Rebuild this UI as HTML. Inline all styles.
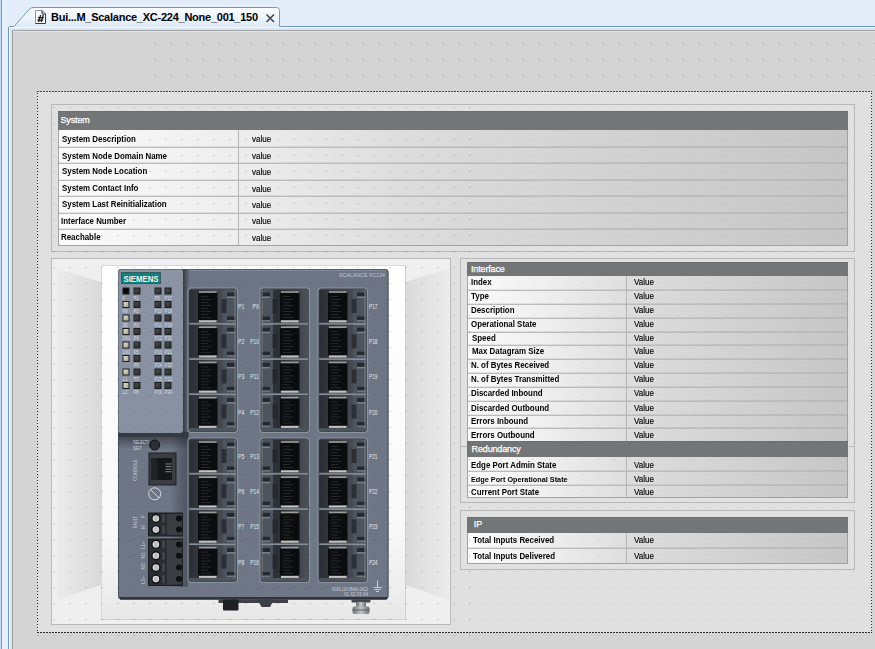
<!DOCTYPE html>
<html><head><meta charset="utf-8">
<style>
*{margin:0;padding:0;box-sizing:border-box}
html,body{width:875px;height:649px;overflow:hidden}
body{position:relative;background:#e3edf9;font-family:"Liberation Sans",sans-serif}
.a{position:absolute}
.dots{position:absolute;background-image:linear-gradient(90deg,#a8a8ea 2px,transparent 2px),linear-gradient(180deg,#000 1px,transparent 1px);background-size:16px 16px}
.hd{background:#737577;border-top:1px solid #6b6d6f;color:#fff;font-size:9px;overflow:hidden}
.ht{color:#fff;font-size:9px;line-height:12px;white-space:nowrap;-webkit-text-stroke:0.25px #fff;letter-spacing:-0.15px}
.row{background:linear-gradient(90deg,#fbfbfb 0%,#eeeeee 22%,#dcdcdc 45%,#c6c6c6 100%);overflow:hidden}
.lb{font-weight:bold;font-size:8.5px;line-height:12px;color:#000;white-space:nowrap;transform:scaleX(.93);transform-origin:0 0}
.sm{font-size:7.5px;transform:scaleX(.97)}
.vl{font-size:8.5px;line-height:12px;color:#000;white-space:nowrap;transform:scaleX(.94);transform-origin:0 0;-webkit-text-stroke:0.15px #000}
.sep{height:1px;background:#adadad}
.dt{background-size:16px 16px;-webkit-mask-image:linear-gradient(180deg,#000 1px,transparent 1px);-webkit-mask-size:16px 16px;}
.pnl{position:absolute;border:1px solid #b8b8b8;background:#e1e1e1}
</style></head><body>
<!-- window frame -->
<div class="a" style="left:0;top:0;width:1px;height:649px;background:#c4daf2"></div>
<div class="a" style="left:1px;top:0;width:1px;height:649px;background:#7f9dc0"></div>
<div class="a" style="left:2px;top:0;width:6px;height:649px;background:#e6f0fb"></div>
<div class="a" style="left:8px;top:5px;width:867px;height:1px;background:#e7f0fb"></div>
<svg class="a" style="left:0;top:0" width="875" height="31">
 <defs><linearGradient id="tg" x1="0" y1="0" x2="0" y2="1"><stop offset="0" stop-color="#fdfeff"/><stop offset="1" stop-color="#d8e6f7"/></linearGradient></defs>
 <path d="M8.5,31 V27.5 L9.5,26.5 H14 L29.5,9 Q31,7.5 34,7.5 H276.5 Q279.5,7.5 279.5,10.5 V26.5 H875 V31 Z" fill="url(#tg)" stroke="none"/>
 <path d="M8.5,31 V27.5 L9.5,26.5 H14 L29.5,9 Q31,7.5 34,7.5 H276.5 Q279.5,7.5 279.5,10.5 V26.5 H875" fill="none" stroke="#6f9bbf" stroke-width="1"/>
 <rect x="9" y="27" width="866" height="1" fill="#ffffff"/>
 <rect x="9" y="28" width="866" height="2" fill="#d6e5f8"/>
 <rect x="9" y="27" width="1" height="4" fill="#ffffff"/>
</svg>
<!-- tab icon -->
<svg class="a" style="left:34px;top:9px" width="14" height="17">
 <path d="M1.5,14.5 V1.5 H8" fill="none" stroke="#9a92b2" stroke-width="1"/>
 <rect x="2" y="2" width="9" height="12" fill="#ffffff"/>
 <path d="M8,1.5 L11.5,5 V14.5 H1.5" fill="none" stroke="#34345e" stroke-width="1"/>
 <path d="M8,1.5 V5 H11.5" fill="#cfcfe0" stroke="#34345e" stroke-width="1"/>
 <path d="M4.6,13.2 L6.6,6 M7.2,13.2 L9.2,6 M3.9,8.7 H9.8 M3.4,11.2 H9.2" stroke="#1a1a1a" stroke-width="1.3" fill="none"/>
</svg>
<div class="a" style="left:51px;top:9px;font:bold 11px 'Liberation Sans';letter-spacing:-0.25px;color:#000;white-space:nowrap;line-height:16px">Bui...M_Scalance_XC-224_None_001_150</div>
<svg class="a" style="left:265px;top:13px" width="11" height="11"><path d="M1.5,1.5 L9,9 M9,1.5 L1.5,9" stroke="#404040" stroke-width="1.5"/></svg>
<div class="a" style="left:8px;top:27px;width:1px;height:622px;background:#7296ba"></div>
<div class="a" style="left:9px;top:27px;width:1px;height:622px;background:#ffffff"></div>
<div class="a" style="left:10px;top:28px;width:2px;height:621px;background:#d6e5f8"></div>
<!-- canvas -->
<div class="a" style="left:12px;top:30px;width:863px;height:619px;background:#d4d4d4;border-top:1px solid #a3a3a3;border-left:1px solid #a3a3a3"></div>
<div class="a" style="left:13px;top:31px;width:862px;height:1px;background:#e4e4e4"></div>
<!-- selection -->
<div class="a" style="left:37px;top:91px;width:835px;height:542px;background:#e0e0e0"></div>
<div class="a" style="left:37px;top:91px;width:835px;height:1px;background:repeating-linear-gradient(90deg,#4a4a4a 0 2px,transparent 2px 3px)"></div>
<div class="a" style="left:37px;top:632px;width:835px;height:1px;background:repeating-linear-gradient(90deg,#2a2a2a 0 2px,transparent 2px 3px)"></div>
<div class="a" style="left:37px;top:92px;width:1px;height:540px;background:repeating-linear-gradient(180deg,transparent 0 1px,#2a2a2a 1px 2px,transparent 2px 3px)"></div>
<div class="a" style="left:871px;top:92px;width:1px;height:540px;background:repeating-linear-gradient(180deg,transparent 0 1px,#2a2a2a 1px 2px,transparent 2px 3px)"></div>
<!-- panels -->
<div class="pnl" style="left:51px;top:104px;width:804px;height:148px"></div>
<div class="pnl" style="left:51px;top:258px;width:400px;height:367px;background:#efefef"></div>
<div class="pnl" style="left:460px;top:258px;width:395px;height:245px"></div>
<div class="a" style="left:460px;top:446px;width:7px;height:1px;background:#b8b8b8"></div>
<div class="a" style="left:849px;top:446px;width:6px;height:1px;background:#b8b8b8"></div>
<div class="pnl" style="left:460px;top:510px;width:395px;height:60px"></div>
<div class="a hd" style="left:58px;top:111px;width:790px;height:19px"></div>
<span class="a ht" style="left:60.5px;top:114.0px">System</span>
<div class="a row" style="left:58px;top:130px;width:790px;height:17px"></div>
<div class="a sep" style="left:58px;top:146px;width:790px;background:rgba(0,0,0,.08)"></div>
<div class="a sep" style="left:58px;top:147px;width:790px;background:rgba(0,0,0,.17)"></div>
<div class="a row" style="left:58px;top:148px;width:790px;height:15px"></div>
<div class="a sep" style="left:58px;top:162px;width:790px;background:rgba(0,0,0,.08)"></div>
<div class="a sep" style="left:58px;top:163px;width:790px;background:rgba(0,0,0,.17)"></div>
<div class="a row" style="left:58px;top:164px;width:790px;height:16px"></div>
<div class="a sep" style="left:58px;top:179px;width:790px;background:rgba(0,0,0,.08)"></div>
<div class="a sep" style="left:58px;top:180px;width:790px;background:rgba(0,0,0,.17)"></div>
<div class="a row" style="left:58px;top:181px;width:790px;height:15px"></div>
<div class="a sep" style="left:58px;top:195px;width:790px;background:rgba(0,0,0,.08)"></div>
<div class="a sep" style="left:58px;top:196px;width:790px;background:rgba(0,0,0,.17)"></div>
<div class="a row" style="left:58px;top:197px;width:790px;height:16px"></div>
<div class="a sep" style="left:58px;top:212px;width:790px;background:rgba(0,0,0,.08)"></div>
<div class="a sep" style="left:58px;top:213px;width:790px;background:rgba(0,0,0,.17)"></div>
<div class="a row" style="left:58px;top:214px;width:790px;height:15px"></div>
<div class="a sep" style="left:58px;top:228px;width:790px;background:rgba(0,0,0,.08)"></div>
<div class="a sep" style="left:58px;top:229px;width:790px;background:rgba(0,0,0,.17)"></div>
<div class="a row" style="left:58px;top:230px;width:790px;height:15px"></div>
<div class="a sep" style="left:58px;top:245px;width:790px;background:#a2a2a2"></div>
<span class="a lb" style="left:61.5px;top:133.0px">System Description</span>
<span class="a vl" style="left:252px;top:133.0px">value</span>
<span class="a lb" style="left:61.5px;top:150.0px">System Node Domain Name</span>
<span class="a vl" style="left:252px;top:150.0px">value</span>
<span class="a lb" style="left:61.5px;top:164.5px">System Node Location</span>
<span class="a vl" style="left:252px;top:166.0px">value</span>
<span class="a lb" style="left:61.5px;top:181.5px">System Contact Info</span>
<span class="a vl" style="left:252px;top:183.0px">value</span>
<span class="a lb" style="left:61.5px;top:197.5px">System Last Reinitialization</span>
<span class="a vl" style="left:252px;top:199.0px">value</span>
<span class="a lb" style="left:60.8px;top:215.0px">Interface Number</span>
<span class="a vl" style="left:252px;top:215.0px">value</span>
<span class="a lb" style="left:60.8px;top:231.0px">Reachable</span>
<span class="a vl" style="left:252px;top:232.0px">value</span>
<div class="a" style="left:58px;top:130px;width:1px;height:115px;background:#a4a4a4"></div>
<div class="a" style="left:847px;top:130px;width:1px;height:115px;background:#a2a2a2"></div>
<div class="a" style="left:238px;top:130px;width:1px;height:115px;background:#b4b4b4"></div>
<div class="a hd" style="left:467px;top:262px;width:381px;height:14px"></div>
<span class="a ht" style="left:471px;top:263.0px">Interface</span>
<div class="a row" style="left:467px;top:276px;width:381px;height:14px"></div>
<div class="a sep" style="left:467px;top:289px;width:381px;background:rgba(0,0,0,.08)"></div>
<div class="a sep" style="left:467px;top:290px;width:381px;background:rgba(0,0,0,.17)"></div>
<div class="a row" style="left:467px;top:291px;width:381px;height:13px"></div>
<div class="a sep" style="left:467px;top:303px;width:381px;background:rgba(0,0,0,.08)"></div>
<div class="a sep" style="left:467px;top:304px;width:381px;background:rgba(0,0,0,.17)"></div>
<div class="a row" style="left:467px;top:305px;width:381px;height:13px"></div>
<div class="a sep" style="left:467px;top:317px;width:381px;background:rgba(0,0,0,.08)"></div>
<div class="a sep" style="left:467px;top:318px;width:381px;background:rgba(0,0,0,.17)"></div>
<div class="a row" style="left:467px;top:319px;width:381px;height:13px"></div>
<div class="a sep" style="left:467px;top:331px;width:381px;background:rgba(0,0,0,.08)"></div>
<div class="a sep" style="left:467px;top:332px;width:381px;background:rgba(0,0,0,.17)"></div>
<div class="a row" style="left:467px;top:333px;width:381px;height:12px"></div>
<div class="a sep" style="left:467px;top:344px;width:381px;background:rgba(0,0,0,.08)"></div>
<div class="a sep" style="left:467px;top:345px;width:381px;background:rgba(0,0,0,.17)"></div>
<div class="a row" style="left:467px;top:346px;width:381px;height:13px"></div>
<div class="a sep" style="left:467px;top:358px;width:381px;background:rgba(0,0,0,.08)"></div>
<div class="a sep" style="left:467px;top:359px;width:381px;background:rgba(0,0,0,.17)"></div>
<div class="a row" style="left:467px;top:360px;width:381px;height:13px"></div>
<div class="a sep" style="left:467px;top:372px;width:381px;background:rgba(0,0,0,.08)"></div>
<div class="a sep" style="left:467px;top:373px;width:381px;background:rgba(0,0,0,.17)"></div>
<div class="a row" style="left:467px;top:374px;width:381px;height:13px"></div>
<div class="a sep" style="left:467px;top:386px;width:381px;background:rgba(0,0,0,.08)"></div>
<div class="a sep" style="left:467px;top:387px;width:381px;background:rgba(0,0,0,.17)"></div>
<div class="a row" style="left:467px;top:388px;width:381px;height:13px"></div>
<div class="a sep" style="left:467px;top:400px;width:381px;background:rgba(0,0,0,.08)"></div>
<div class="a sep" style="left:467px;top:401px;width:381px;background:rgba(0,0,0,.17)"></div>
<div class="a row" style="left:467px;top:402px;width:381px;height:13px"></div>
<div class="a sep" style="left:467px;top:414px;width:381px;background:rgba(0,0,0,.08)"></div>
<div class="a sep" style="left:467px;top:415px;width:381px;background:rgba(0,0,0,.17)"></div>
<div class="a row" style="left:467px;top:416px;width:381px;height:12px"></div>
<div class="a sep" style="left:467px;top:427px;width:381px;background:rgba(0,0,0,.08)"></div>
<div class="a sep" style="left:467px;top:428px;width:381px;background:rgba(0,0,0,.17)"></div>
<div class="a row" style="left:467px;top:429px;width:381px;height:12px"></div>
<div class="a sep" style="left:467px;top:441px;width:381px;background:#a2a2a2"></div>
<span class="a lb" style="left:471px;top:276.0px">Index</span>
<span class="a vl" style="left:633.8px;top:276.0px">Value</span>
<span class="a lb" style="left:471px;top:290.0px">Type</span>
<span class="a vl" style="left:633.8px;top:290.0px">Value</span>
<span class="a lb" style="left:471px;top:304.0px">Description</span>
<span class="a vl" style="left:633.8px;top:304.0px">Value</span>
<span class="a lb" style="left:471px;top:318.0px">Operational State</span>
<span class="a vl" style="left:633.8px;top:318.0px">Value</span>
<span class="a lb" style="left:472px;top:331.5px">Speed</span>
<span class="a vl" style="left:633.8px;top:331.5px">Value</span>
<span class="a lb" style="left:471.6px;top:345.0px">Max Datagram Size</span>
<span class="a vl" style="left:633.8px;top:345.0px">Value</span>
<span class="a lb" style="left:471px;top:359.0px">N. of Bytes Received</span>
<span class="a vl" style="left:633.8px;top:359.0px">Value</span>
<span class="a lb" style="left:471px;top:373.0px">N. of Bytes Transmitted</span>
<span class="a vl" style="left:633.8px;top:373.0px">Value</span>
<span class="a lb" style="left:471px;top:387.0px">Discarded Inbound</span>
<span class="a vl" style="left:633.8px;top:387.0px">Value</span>
<span class="a lb" style="left:471px;top:402.0px">Discarded Outbound</span>
<span class="a vl" style="left:633.8px;top:402.0px">Value</span>
<span class="a lb" style="left:471px;top:415.0px">Errors Inbound</span>
<span class="a vl" style="left:633.8px;top:415.0px">Value</span>
<span class="a lb" style="left:471px;top:429.0px">Errors Outbound</span>
<span class="a vl" style="left:633.8px;top:429.0px">Value</span>
<div class="a" style="left:467px;top:276px;width:1px;height:165px;background:#a4a4a4"></div>
<div class="a" style="left:847px;top:276px;width:1px;height:165px;background:#a2a2a2"></div>
<div class="a" style="left:626px;top:276px;width:1px;height:165px;background:#b4b4b4"></div>
<div class="a hd" style="left:467px;top:441px;width:381px;height:16px"></div>
<span class="a ht" style="left:471.6px;top:443.0px">Redundancy</span>
<div class="a row" style="left:467px;top:457px;width:381px;height:14px"></div>
<div class="a sep" style="left:467px;top:470px;width:381px;background:rgba(0,0,0,.08)"></div>
<div class="a sep" style="left:467px;top:471px;width:381px;background:rgba(0,0,0,.17)"></div>
<div class="a row" style="left:467px;top:472px;width:381px;height:13px"></div>
<div class="a sep" style="left:467px;top:484px;width:381px;background:rgba(0,0,0,.08)"></div>
<div class="a sep" style="left:467px;top:485px;width:381px;background:rgba(0,0,0,.17)"></div>
<div class="a row" style="left:467px;top:486px;width:381px;height:11px"></div>
<div class="a sep" style="left:467px;top:497px;width:381px;background:#a2a2a2"></div>
<span class="a lb" style="left:471.2px;top:459.0px">Edge Port Admin State</span>
<span class="a vl" style="left:633.8px;top:459.0px">Value</span>
<span class="a lb sm" style="left:471.2px;top:474.0px">Edge Port Operational State</span>
<span class="a vl" style="left:633.8px;top:473.0px">Value</span>
<span class="a lb" style="left:471.2px;top:486.0px">Current Port State</span>
<span class="a vl" style="left:633.8px;top:486.0px">Value</span>
<div class="a" style="left:467px;top:457px;width:1px;height:40px;background:#a4a4a4"></div>
<div class="a" style="left:847px;top:457px;width:1px;height:40px;background:#a2a2a2"></div>
<div class="a" style="left:626px;top:457px;width:1px;height:40px;background:#b4b4b4"></div>
<div class="a hd" style="left:467px;top:517px;width:381px;height:16px"></div>
<span class="a ht" style="left:473.8px;top:518.0px">IP</span>
<div class="a row" style="left:467px;top:533px;width:381px;height:15px"></div>
<div class="a sep" style="left:467px;top:547px;width:381px;background:rgba(0,0,0,.08)"></div>
<div class="a sep" style="left:467px;top:548px;width:381px;background:rgba(0,0,0,.17)"></div>
<div class="a row" style="left:467px;top:549px;width:381px;height:14px"></div>
<div class="a sep" style="left:467px;top:563px;width:381px;background:#a2a2a2"></div>
<span class="a lb" style="left:473.2px;top:534.0px">Total Inputs Received</span>
<span class="a vl" style="left:633.8px;top:534.0px">Value</span>
<span class="a lb" style="left:473.2px;top:549.5px">Total Inputs Delivered</span>
<span class="a vl" style="left:633.8px;top:549.5px">Value</span>
<div class="a" style="left:467px;top:533px;width:1px;height:30px;background:#a4a4a4"></div>
<div class="a" style="left:847px;top:533px;width:1px;height:30px;background:#a2a2a2"></div>
<div class="a" style="left:626px;top:533px;width:1px;height:30px;background:#b4b4b4"></div>
<svg class="a" style="left:0;top:0" width="875" height="649">
<defs>
<linearGradient id="trL" x1="0" y1="0" x2="1" y2="0"><stop offset="0" stop-color="#ececec"/><stop offset="1" stop-color="#d9d9d9"/></linearGradient>
<linearGradient id="trR" x1="0" y1="0" x2="1" y2="0"><stop offset="0" stop-color="#dadada"/><stop offset="1" stop-color="#ebebeb"/></linearGradient>
<linearGradient id="wh" x1="0" y1="0" x2="0" y2="1"><stop offset="0" stop-color="#ffffff"/><stop offset="0.75" stop-color="#f8f8f8"/><stop offset="1" stop-color="#e8e8e8"/></linearGradient>
<linearGradient id="body" x1="0" y1="0" x2="0" y2="1"><stop offset="0" stop-color="#6d7484"/><stop offset="1" stop-color="#6f7686"/></linearGradient>
<linearGradient id="ledp" x1="0" y1="0" x2="0" y2="1"><stop offset="0" stop-color="#8c94a4"/><stop offset="1" stop-color="#8790a0"/></linearGradient>
<linearGradient id="shd" x1="0" y1="0" x2="1" y2="0"><stop offset="0" stop-color="#2c3036"/><stop offset="1" stop-color="#656c7b"/></linearGradient>
<linearGradient id="rec" x1="0" y1="0" x2="1" y2="0"><stop offset="0" stop-color="#2b2f35"/><stop offset="0.3" stop-color="#33373d"/><stop offset="1" stop-color="#464a51"/></linearGradient>
<linearGradient id="recm" x1="0" y1="0" x2="1" y2="0"><stop offset="0" stop-color="#2f3339"/><stop offset="0.25" stop-color="#2b2f35"/><stop offset="1" stop-color="#4d525a"/></linearGradient>
<linearGradient id="led" x1="0" y1="0" x2="1" y2="1"><stop offset="0" stop-color="#e4e0cc"/><stop offset="1" stop-color="#a9a592"/></linearGradient>
<linearGradient id="ledd" x1="0" y1="0" x2="1" y2="1"><stop offset="0" stop-color="#4a4c4e"/><stop offset="1" stop-color="#2a2c2e"/></linearGradient>
<linearGradient id="gnd" x1="0" y1="0" x2="1" y2="0"><stop offset="0" stop-color="#6f7174"/><stop offset="0.5" stop-color="#c4c5c7"/><stop offset="1" stop-color="#6a6c70"/></linearGradient>
<linearGradient id="sh2" x1="0" y1="0" x2="1" y2="0"><stop offset="0" stop-color="#23272d" stop-opacity="0"/><stop offset="1" stop-color="#23272d" stop-opacity="0.45"/></linearGradient>
<linearGradient id="sh3" x1="0" y1="0" x2="0" y2="1"><stop offset="0" stop-color="#23272d" stop-opacity="0.55"/><stop offset="1" stop-color="#23272d" stop-opacity="0"/></linearGradient>
</defs>
<polygon points="57,269 101,282 101,585 57,600" fill="url(#trL)"/>
<polygon points="405,282 449,269 449,600 405,585" fill="url(#trR)"/>
<rect x="101" y="265" width="304" height="355" fill="url(#wh)"/>
<path d="M101.5,620 V265.5 H405" fill="none" stroke="#d8d8d8" stroke-width="1"/>
<path d="M101.5,619.5 H405.5 V265" fill="none" stroke="#d0d0d0" stroke-width="1"/>
<rect x="118" y="269" width="270.5" height="330.5" rx="3" fill="url(#body)"/>
<rect x="118.5" y="269.5" width="269.5" height="329.5" rx="3" fill="none" stroke="#4a505a" stroke-width="1"/>
<rect x="120" y="597" width="267" height="2.5" fill="#30343b"/>
<rect x="186" y="269.8" width="200" height="1.2" fill="#8a909b" opacity="0.8"/>
<rect x="182" y="269.5" width="7" height="168" fill="url(#shd)"/>
<rect x="118.5" y="432" width="70" height="5" fill="#353940"/>
<rect x="118.5" y="437" width="70" height="12" fill="url(#sh3)"/>
<rect x="170" y="437" width="18" height="150" fill="url(#sh2)"/>
<rect x="118" y="269" width="65" height="164" rx="3" fill="url(#ledp)"/>
<path d="M118.5,432 V272 Q118.5,269.5 121.5,269.5 H182.5" fill="none" stroke="#6a717f" stroke-width="1"/>
<rect x="121.5" y="272.5" width="39" height="11" fill="#12807c" stroke="#2f5f63" stroke-width="1"/>
<text x="141" y="281.8" text-anchor="middle" font-family="Liberation Sans" font-weight="bold" font-size="8.4" fill="#eef6f4" textLength="35" lengthAdjust="spacingAndGlyphs">SIEMENS</text>
<rect x="122.5" y="287.5" width="7" height="7" fill="#1c1d1f"/>
<rect x="123.5" y="288.5" width="5" height="5" fill="#080808"/>
<text x="122.5" y="299.8" font-family="Liberation Sans" font-size="4.6" fill="#d6dae0" textLength="2.6" lengthAdjust="spacingAndGlyphs">F</text>
<rect x="133.5" y="287.5" width="7" height="7" fill="#1c1d1f"/>
<rect x="134.5" y="288.5" width="5" height="5" fill="url(#ledd)"/>
<text x="133.5" y="299.8" font-family="Liberation Sans" font-size="4.6" fill="#d6dae0" textLength="5.2" lengthAdjust="spacingAndGlyphs">P1</text>
<rect x="154.5" y="287.5" width="7" height="7" fill="#1c1d1f"/>
<rect x="155.5" y="288.5" width="5" height="5" fill="url(#ledd)"/>
<text x="154.5" y="299.8" font-family="Liberation Sans" font-size="4.6" fill="#d6dae0" textLength="5.2" lengthAdjust="spacingAndGlyphs">P9</text>
<rect x="164.5" y="287.5" width="7" height="7" fill="#1c1d1f"/>
<rect x="165.5" y="288.5" width="5" height="5" fill="url(#ledd)"/>
<text x="164.5" y="299.8" font-family="Liberation Sans" font-size="4.6" fill="#d6dae0" textLength="7.800000000000001" lengthAdjust="spacingAndGlyphs">P17</text>
<rect x="122.5" y="301.0" width="7" height="7" fill="#1c1d1f"/>
<rect x="123.5" y="302.0" width="5" height="5" fill="url(#led)"/>
<text x="122.5" y="313.3" font-family="Liberation Sans" font-size="4.6" fill="#d6dae0" textLength="5.2" lengthAdjust="spacingAndGlyphs">RM</text>
<rect x="133.5" y="301.0" width="7" height="7" fill="#1c1d1f"/>
<rect x="134.5" y="302.0" width="5" height="5" fill="url(#ledd)"/>
<text x="133.5" y="313.3" font-family="Liberation Sans" font-size="4.6" fill="#d6dae0" textLength="5.2" lengthAdjust="spacingAndGlyphs">P2</text>
<rect x="154.5" y="301.0" width="7" height="7" fill="#1c1d1f"/>
<rect x="155.5" y="302.0" width="5" height="5" fill="url(#ledd)"/>
<text x="154.5" y="313.3" font-family="Liberation Sans" font-size="4.6" fill="#d6dae0" textLength="7.800000000000001" lengthAdjust="spacingAndGlyphs">P10</text>
<rect x="164.5" y="301.0" width="7" height="7" fill="#1c1d1f"/>
<rect x="165.5" y="302.0" width="5" height="5" fill="url(#ledd)"/>
<text x="164.5" y="313.3" font-family="Liberation Sans" font-size="4.6" fill="#d6dae0" textLength="7.800000000000001" lengthAdjust="spacingAndGlyphs">P18</text>
<rect x="122.5" y="314.5" width="7" height="7" fill="#1c1d1f"/>
<rect x="123.5" y="315.5" width="5" height="5" fill="url(#led)"/>
<text x="122.5" y="326.8" font-family="Liberation Sans" font-size="4.6" fill="#d6dae0" textLength="5.2" lengthAdjust="spacingAndGlyphs">SB</text>
<rect x="133.5" y="314.5" width="7" height="7" fill="#1c1d1f"/>
<rect x="134.5" y="315.5" width="5" height="5" fill="url(#ledd)"/>
<text x="133.5" y="326.8" font-family="Liberation Sans" font-size="4.6" fill="#d6dae0" textLength="5.2" lengthAdjust="spacingAndGlyphs">P3</text>
<rect x="154.5" y="314.5" width="7" height="7" fill="#1c1d1f"/>
<rect x="155.5" y="315.5" width="5" height="5" fill="url(#ledd)"/>
<text x="154.5" y="326.8" font-family="Liberation Sans" font-size="4.6" fill="#d6dae0" textLength="7.800000000000001" lengthAdjust="spacingAndGlyphs">P11</text>
<rect x="164.5" y="314.5" width="7" height="7" fill="#1c1d1f"/>
<rect x="165.5" y="315.5" width="5" height="5" fill="url(#ledd)"/>
<text x="164.5" y="326.8" font-family="Liberation Sans" font-size="4.6" fill="#d6dae0" textLength="7.800000000000001" lengthAdjust="spacingAndGlyphs">P19</text>
<rect x="122.5" y="328.0" width="7" height="7" fill="#1c1d1f"/>
<rect x="123.5" y="329.0" width="5" height="5" fill="url(#led)"/>
<text x="122.5" y="340.3" font-family="Liberation Sans" font-size="4.6" fill="#d6dae0" textLength="7.800000000000001" lengthAdjust="spacingAndGlyphs">DM1</text>
<rect x="133.5" y="328.0" width="7" height="7" fill="#1c1d1f"/>
<rect x="134.5" y="329.0" width="5" height="5" fill="url(#ledd)"/>
<text x="133.5" y="340.3" font-family="Liberation Sans" font-size="4.6" fill="#d6dae0" textLength="5.2" lengthAdjust="spacingAndGlyphs">P4</text>
<rect x="154.5" y="328.0" width="7" height="7" fill="#1c1d1f"/>
<rect x="155.5" y="329.0" width="5" height="5" fill="url(#ledd)"/>
<text x="154.5" y="340.3" font-family="Liberation Sans" font-size="4.6" fill="#d6dae0" textLength="7.800000000000001" lengthAdjust="spacingAndGlyphs">P12</text>
<rect x="164.5" y="328.0" width="7" height="7" fill="#1c1d1f"/>
<rect x="165.5" y="329.0" width="5" height="5" fill="url(#ledd)"/>
<text x="164.5" y="340.3" font-family="Liberation Sans" font-size="4.6" fill="#d6dae0" textLength="7.800000000000001" lengthAdjust="spacingAndGlyphs">P20</text>
<rect x="122.5" y="341.5" width="7" height="7" fill="#1c1d1f"/>
<rect x="123.5" y="342.5" width="5" height="5" fill="url(#led)"/>
<text x="122.5" y="353.8" font-family="Liberation Sans" font-size="4.6" fill="#d6dae0" textLength="7.800000000000001" lengthAdjust="spacingAndGlyphs">DM2</text>
<rect x="133.5" y="341.5" width="7" height="7" fill="#1c1d1f"/>
<rect x="134.5" y="342.5" width="5" height="5" fill="url(#ledd)"/>
<text x="133.5" y="353.8" font-family="Liberation Sans" font-size="4.6" fill="#d6dae0" textLength="5.2" lengthAdjust="spacingAndGlyphs">P5</text>
<rect x="154.5" y="341.5" width="7" height="7" fill="#1c1d1f"/>
<rect x="155.5" y="342.5" width="5" height="5" fill="url(#ledd)"/>
<text x="154.5" y="353.8" font-family="Liberation Sans" font-size="4.6" fill="#d6dae0" textLength="7.800000000000001" lengthAdjust="spacingAndGlyphs">P13</text>
<rect x="164.5" y="341.5" width="7" height="7" fill="#1c1d1f"/>
<rect x="165.5" y="342.5" width="5" height="5" fill="url(#ledd)"/>
<text x="164.5" y="353.8" font-family="Liberation Sans" font-size="4.6" fill="#d6dae0" textLength="7.800000000000001" lengthAdjust="spacingAndGlyphs">P21</text>
<rect x="122.5" y="355.0" width="7" height="7" fill="#1c1d1f"/>
<rect x="123.5" y="356.0" width="5" height="5" fill="url(#led)"/>
<rect x="133.5" y="355.0" width="7" height="7" fill="#1c1d1f"/>
<rect x="134.5" y="356.0" width="5" height="5" fill="url(#ledd)"/>
<text x="133.5" y="367.3" font-family="Liberation Sans" font-size="4.6" fill="#d6dae0" textLength="5.2" lengthAdjust="spacingAndGlyphs">P6</text>
<rect x="154.5" y="355.0" width="7" height="7" fill="#1c1d1f"/>
<rect x="155.5" y="356.0" width="5" height="5" fill="url(#ledd)"/>
<text x="154.5" y="367.3" font-family="Liberation Sans" font-size="4.6" fill="#d6dae0" textLength="7.800000000000001" lengthAdjust="spacingAndGlyphs">P14</text>
<rect x="164.5" y="355.0" width="7" height="7" fill="#1c1d1f"/>
<rect x="165.5" y="356.0" width="5" height="5" fill="url(#ledd)"/>
<text x="164.5" y="367.3" font-family="Liberation Sans" font-size="4.6" fill="#d6dae0" textLength="7.800000000000001" lengthAdjust="spacingAndGlyphs">P22</text>
<rect x="122.5" y="368.5" width="7" height="7" fill="#1c1d1f"/>
<rect x="123.5" y="369.5" width="5" height="5" fill="url(#led)"/>
<text x="122.5" y="380.8" font-family="Liberation Sans" font-size="4.6" fill="#d6dae0" textLength="5.2" lengthAdjust="spacingAndGlyphs">L1</text>
<rect x="133.5" y="368.5" width="7" height="7" fill="#1c1d1f"/>
<rect x="134.5" y="369.5" width="5" height="5" fill="url(#ledd)"/>
<text x="133.5" y="380.8" font-family="Liberation Sans" font-size="4.6" fill="#d6dae0" textLength="5.2" lengthAdjust="spacingAndGlyphs">P7</text>
<rect x="154.5" y="368.5" width="7" height="7" fill="#1c1d1f"/>
<rect x="155.5" y="369.5" width="5" height="5" fill="url(#ledd)"/>
<text x="154.5" y="380.8" font-family="Liberation Sans" font-size="4.6" fill="#d6dae0" textLength="7.800000000000001" lengthAdjust="spacingAndGlyphs">P15</text>
<rect x="164.5" y="368.5" width="7" height="7" fill="#1c1d1f"/>
<rect x="165.5" y="369.5" width="5" height="5" fill="url(#ledd)"/>
<text x="164.5" y="380.8" font-family="Liberation Sans" font-size="4.6" fill="#d6dae0" textLength="7.800000000000001" lengthAdjust="spacingAndGlyphs">P23</text>
<rect x="122.5" y="382.0" width="7" height="7" fill="#1c1d1f"/>
<rect x="123.5" y="383.0" width="5" height="5" fill="url(#led)"/>
<text x="122.5" y="394.3" font-family="Liberation Sans" font-size="4.6" fill="#d6dae0" textLength="5.2" lengthAdjust="spacingAndGlyphs">L2</text>
<rect x="133.5" y="382.0" width="7" height="7" fill="#1c1d1f"/>
<rect x="134.5" y="383.0" width="5" height="5" fill="url(#ledd)"/>
<text x="133.5" y="394.3" font-family="Liberation Sans" font-size="4.6" fill="#d6dae0" textLength="5.2" lengthAdjust="spacingAndGlyphs">P8</text>
<rect x="154.5" y="382.0" width="7" height="7" fill="#1c1d1f"/>
<rect x="155.5" y="383.0" width="5" height="5" fill="url(#ledd)"/>
<text x="154.5" y="394.3" font-family="Liberation Sans" font-size="4.6" fill="#d6dae0" textLength="7.800000000000001" lengthAdjust="spacingAndGlyphs">P16</text>
<rect x="164.5" y="382.0" width="7" height="7" fill="#1c1d1f"/>
<rect x="165.5" y="383.0" width="5" height="5" fill="url(#ledd)"/>
<text x="164.5" y="394.3" font-family="Liberation Sans" font-size="4.6" fill="#d6dae0" textLength="7.800000000000001" lengthAdjust="spacingAndGlyphs">P24</text>
<rect x="188.0" y="288.0" width="49.5" height="144.5" rx="3.5" fill="#4e545e"/>
<rect x="189.0" y="289.5" width="34" height="33" fill="url(#rec)"/>
<rect x="221.5" y="299.0" width="5" height="14" fill="#2c3036"/>
<rect x="198.0" y="293.0" width="19.5" height="27" fill="#0b0c0e"/>
<rect x="201.0" y="296.0" width="7" height="0.9" fill="#2a2c30"/>
<rect x="201.0" y="299.0" width="10" height="0.9" fill="#2a2c30"/>
<rect x="201.0" y="302.0" width="7" height="0.9" fill="#2a2c30"/>
<rect x="201.0" y="305.0" width="10" height="0.9" fill="#2a2c30"/>
<rect x="201.0" y="308.0" width="7" height="0.9" fill="#2a2c30"/>
<rect x="201.0" y="311.0" width="10" height="0.9" fill="#2a2c30"/>
<rect x="201.0" y="314.0" width="7" height="0.9" fill="#2a2c30"/>
<rect x="201.0" y="317.0" width="10" height="0.9" fill="#2a2c30"/>
<rect x="199.0" y="291.2" width="17.5" height="1.6" fill="#9c9a94"/>
<rect x="199.0" y="320.3" width="17.5" height="2" fill="#c4c3be"/>
<rect x="227.0" y="292.5" width="8.5" height="4" fill="#25282d"/>
<rect x="227.0" y="296.5" width="8.5" height="1.5" fill="#7c828c"/>
<rect x="227.0" y="316.5" width="8.5" height="3.5" fill="#25282d"/>
<rect x="227.0" y="320.0" width="8.5" height="1.5" fill="#6f757f"/>
<rect x="234.5" y="290.0" width="1" height="33" fill="#7a808a"/>
<rect x="189.0" y="323.2" width="47" height="1.6" fill="#8a909b"/>
<text x="238" y="309.0" font-family="Liberation Sans" font-size="7" fill="#e6e9ee" textLength="6.2" lengthAdjust="spacingAndGlyphs">P1</text>
<rect x="189.0" y="324.7" width="34" height="33" fill="url(#rec)"/>
<rect x="221.5" y="334.2" width="5" height="14" fill="#2c3036"/>
<rect x="198.0" y="328.2" width="19.5" height="27" fill="#0b0c0e"/>
<rect x="201.0" y="331.2" width="7" height="0.9" fill="#2a2c30"/>
<rect x="201.0" y="334.2" width="10" height="0.9" fill="#2a2c30"/>
<rect x="201.0" y="337.2" width="7" height="0.9" fill="#2a2c30"/>
<rect x="201.0" y="340.2" width="10" height="0.9" fill="#2a2c30"/>
<rect x="201.0" y="343.2" width="7" height="0.9" fill="#2a2c30"/>
<rect x="201.0" y="346.2" width="10" height="0.9" fill="#2a2c30"/>
<rect x="201.0" y="349.2" width="7" height="0.9" fill="#2a2c30"/>
<rect x="201.0" y="352.2" width="10" height="0.9" fill="#2a2c30"/>
<rect x="199.0" y="326.4" width="17.5" height="1.6" fill="#9c9a94"/>
<rect x="199.0" y="355.5" width="17.5" height="2" fill="#c4c3be"/>
<rect x="227.0" y="327.7" width="8.5" height="4" fill="#25282d"/>
<rect x="227.0" y="331.7" width="8.5" height="1.5" fill="#7c828c"/>
<rect x="227.0" y="351.7" width="8.5" height="3.5" fill="#25282d"/>
<rect x="227.0" y="355.2" width="8.5" height="1.5" fill="#6f757f"/>
<rect x="234.5" y="325.2" width="1" height="33" fill="#7a808a"/>
<rect x="189.0" y="358.4" width="47" height="1.6" fill="#8a909b"/>
<text x="238" y="344.2" font-family="Liberation Sans" font-size="7" fill="#e6e9ee" textLength="6.2" lengthAdjust="spacingAndGlyphs">P2</text>
<rect x="189.0" y="359.9" width="34" height="33" fill="url(#rec)"/>
<rect x="221.5" y="369.4" width="5" height="14" fill="#2c3036"/>
<rect x="198.0" y="363.4" width="19.5" height="27" fill="#0b0c0e"/>
<rect x="201.0" y="366.4" width="7" height="0.9" fill="#2a2c30"/>
<rect x="201.0" y="369.4" width="10" height="0.9" fill="#2a2c30"/>
<rect x="201.0" y="372.4" width="7" height="0.9" fill="#2a2c30"/>
<rect x="201.0" y="375.4" width="10" height="0.9" fill="#2a2c30"/>
<rect x="201.0" y="378.4" width="7" height="0.9" fill="#2a2c30"/>
<rect x="201.0" y="381.4" width="10" height="0.9" fill="#2a2c30"/>
<rect x="201.0" y="384.4" width="7" height="0.9" fill="#2a2c30"/>
<rect x="201.0" y="387.4" width="10" height="0.9" fill="#2a2c30"/>
<rect x="199.0" y="361.59999999999997" width="17.5" height="1.6" fill="#9c9a94"/>
<rect x="199.0" y="390.7" width="17.5" height="2" fill="#c4c3be"/>
<rect x="227.0" y="362.9" width="8.5" height="4" fill="#25282d"/>
<rect x="227.0" y="366.9" width="8.5" height="1.5" fill="#7c828c"/>
<rect x="227.0" y="386.9" width="8.5" height="3.5" fill="#25282d"/>
<rect x="227.0" y="390.4" width="8.5" height="1.5" fill="#6f757f"/>
<rect x="234.5" y="360.4" width="1" height="33" fill="#7a808a"/>
<rect x="189.0" y="393.59999999999997" width="47" height="1.6" fill="#8a909b"/>
<text x="238" y="379.4" font-family="Liberation Sans" font-size="7" fill="#e6e9ee" textLength="6.2" lengthAdjust="spacingAndGlyphs">P3</text>
<rect x="189.0" y="395.1" width="34" height="33" fill="url(#rec)"/>
<rect x="221.5" y="404.6" width="5" height="14" fill="#2c3036"/>
<rect x="198.0" y="398.6" width="19.5" height="27" fill="#0b0c0e"/>
<rect x="201.0" y="401.6" width="7" height="0.9" fill="#2a2c30"/>
<rect x="201.0" y="404.6" width="10" height="0.9" fill="#2a2c30"/>
<rect x="201.0" y="407.6" width="7" height="0.9" fill="#2a2c30"/>
<rect x="201.0" y="410.6" width="10" height="0.9" fill="#2a2c30"/>
<rect x="201.0" y="413.6" width="7" height="0.9" fill="#2a2c30"/>
<rect x="201.0" y="416.6" width="10" height="0.9" fill="#2a2c30"/>
<rect x="201.0" y="419.6" width="7" height="0.9" fill="#2a2c30"/>
<rect x="201.0" y="422.6" width="10" height="0.9" fill="#2a2c30"/>
<rect x="199.0" y="396.8" width="17.5" height="1.6" fill="#9c9a94"/>
<rect x="199.0" y="425.90000000000003" width="17.5" height="2" fill="#c4c3be"/>
<rect x="227.0" y="398.1" width="8.5" height="4" fill="#25282d"/>
<rect x="227.0" y="402.1" width="8.5" height="1.5" fill="#7c828c"/>
<rect x="227.0" y="422.1" width="8.5" height="3.5" fill="#25282d"/>
<rect x="227.0" y="425.6" width="8.5" height="1.5" fill="#6f757f"/>
<rect x="234.5" y="395.6" width="1" height="33" fill="#7a808a"/>
<text x="238" y="414.6" font-family="Liberation Sans" font-size="7" fill="#e6e9ee" textLength="6.2" lengthAdjust="spacingAndGlyphs">P4</text>
<rect x="188.0" y="288.0" width="49.5" height="144.5" rx="3.5" fill="none" stroke="#8e949e" stroke-width="1.2"/>
<rect x="189.0" y="289.0" width="47.5" height="142.5" rx="2.5" fill="none" stroke="#3d414a" stroke-width="0.8" opacity="0.7"/>
<rect x="260.0" y="288.0" width="49.5" height="144.5" rx="3.5" fill="#4e545e"/>
<rect x="273.0" y="289.5" width="35" height="33" fill="url(#recm)"/>
<rect x="272.5" y="299.0" width="5" height="14" fill="#25282d"/>
<rect x="280.0" y="293.0" width="19.5" height="27" fill="#0b0c0e"/>
<rect x="283.0" y="296.0" width="7" height="0.9" fill="#2a2c30"/>
<rect x="283.0" y="299.0" width="10" height="0.9" fill="#2a2c30"/>
<rect x="283.0" y="302.0" width="7" height="0.9" fill="#2a2c30"/>
<rect x="283.0" y="305.0" width="10" height="0.9" fill="#2a2c30"/>
<rect x="283.0" y="308.0" width="7" height="0.9" fill="#2a2c30"/>
<rect x="283.0" y="311.0" width="10" height="0.9" fill="#2a2c30"/>
<rect x="283.0" y="314.0" width="7" height="0.9" fill="#2a2c30"/>
<rect x="283.0" y="317.0" width="10" height="0.9" fill="#2a2c30"/>
<rect x="281.0" y="291.2" width="17.5" height="1.6" fill="#9c9a94"/>
<rect x="281.0" y="320.3" width="17.5" height="2" fill="#c4c3be"/>
<rect x="261.5" y="292.5" width="8.5" height="4" fill="#25282d"/>
<rect x="261.5" y="296.5" width="8.5" height="1.5" fill="#7c828c"/>
<rect x="261.5" y="316.5" width="8.5" height="3.5" fill="#25282d"/>
<rect x="261.5" y="320.0" width="8.5" height="1.5" fill="#6f757f"/>
<rect x="261.5" y="290.0" width="1" height="33" fill="#7a808a"/>
<rect x="261.0" y="323.2" width="47" height="1.6" fill="#8a909b"/>
<text x="258.8" y="309.0" text-anchor="end" font-family="Liberation Sans" font-size="7" fill="#e6e9ee" textLength="6.2" lengthAdjust="spacingAndGlyphs">P9</text>
<rect x="273.0" y="324.7" width="35" height="33" fill="url(#recm)"/>
<rect x="272.5" y="334.2" width="5" height="14" fill="#25282d"/>
<rect x="280.0" y="328.2" width="19.5" height="27" fill="#0b0c0e"/>
<rect x="283.0" y="331.2" width="7" height="0.9" fill="#2a2c30"/>
<rect x="283.0" y="334.2" width="10" height="0.9" fill="#2a2c30"/>
<rect x="283.0" y="337.2" width="7" height="0.9" fill="#2a2c30"/>
<rect x="283.0" y="340.2" width="10" height="0.9" fill="#2a2c30"/>
<rect x="283.0" y="343.2" width="7" height="0.9" fill="#2a2c30"/>
<rect x="283.0" y="346.2" width="10" height="0.9" fill="#2a2c30"/>
<rect x="283.0" y="349.2" width="7" height="0.9" fill="#2a2c30"/>
<rect x="283.0" y="352.2" width="10" height="0.9" fill="#2a2c30"/>
<rect x="281.0" y="326.4" width="17.5" height="1.6" fill="#9c9a94"/>
<rect x="281.0" y="355.5" width="17.5" height="2" fill="#c4c3be"/>
<rect x="261.5" y="327.7" width="8.5" height="4" fill="#25282d"/>
<rect x="261.5" y="331.7" width="8.5" height="1.5" fill="#7c828c"/>
<rect x="261.5" y="351.7" width="8.5" height="3.5" fill="#25282d"/>
<rect x="261.5" y="355.2" width="8.5" height="1.5" fill="#6f757f"/>
<rect x="261.5" y="325.2" width="1" height="33" fill="#7a808a"/>
<rect x="261.0" y="358.4" width="47" height="1.6" fill="#8a909b"/>
<text x="258.8" y="344.2" text-anchor="end" font-family="Liberation Sans" font-size="7" fill="#e6e9ee" textLength="8.5" lengthAdjust="spacingAndGlyphs">P10</text>
<rect x="273.0" y="359.9" width="35" height="33" fill="url(#recm)"/>
<rect x="272.5" y="369.4" width="5" height="14" fill="#25282d"/>
<rect x="280.0" y="363.4" width="19.5" height="27" fill="#0b0c0e"/>
<rect x="283.0" y="366.4" width="7" height="0.9" fill="#2a2c30"/>
<rect x="283.0" y="369.4" width="10" height="0.9" fill="#2a2c30"/>
<rect x="283.0" y="372.4" width="7" height="0.9" fill="#2a2c30"/>
<rect x="283.0" y="375.4" width="10" height="0.9" fill="#2a2c30"/>
<rect x="283.0" y="378.4" width="7" height="0.9" fill="#2a2c30"/>
<rect x="283.0" y="381.4" width="10" height="0.9" fill="#2a2c30"/>
<rect x="283.0" y="384.4" width="7" height="0.9" fill="#2a2c30"/>
<rect x="283.0" y="387.4" width="10" height="0.9" fill="#2a2c30"/>
<rect x="281.0" y="361.59999999999997" width="17.5" height="1.6" fill="#9c9a94"/>
<rect x="281.0" y="390.7" width="17.5" height="2" fill="#c4c3be"/>
<rect x="261.5" y="362.9" width="8.5" height="4" fill="#25282d"/>
<rect x="261.5" y="366.9" width="8.5" height="1.5" fill="#7c828c"/>
<rect x="261.5" y="386.9" width="8.5" height="3.5" fill="#25282d"/>
<rect x="261.5" y="390.4" width="8.5" height="1.5" fill="#6f757f"/>
<rect x="261.5" y="360.4" width="1" height="33" fill="#7a808a"/>
<rect x="261.0" y="393.59999999999997" width="47" height="1.6" fill="#8a909b"/>
<text x="258.8" y="379.4" text-anchor="end" font-family="Liberation Sans" font-size="7" fill="#e6e9ee" textLength="8.5" lengthAdjust="spacingAndGlyphs">P11</text>
<rect x="273.0" y="395.1" width="35" height="33" fill="url(#recm)"/>
<rect x="272.5" y="404.6" width="5" height="14" fill="#25282d"/>
<rect x="280.0" y="398.6" width="19.5" height="27" fill="#0b0c0e"/>
<rect x="283.0" y="401.6" width="7" height="0.9" fill="#2a2c30"/>
<rect x="283.0" y="404.6" width="10" height="0.9" fill="#2a2c30"/>
<rect x="283.0" y="407.6" width="7" height="0.9" fill="#2a2c30"/>
<rect x="283.0" y="410.6" width="10" height="0.9" fill="#2a2c30"/>
<rect x="283.0" y="413.6" width="7" height="0.9" fill="#2a2c30"/>
<rect x="283.0" y="416.6" width="10" height="0.9" fill="#2a2c30"/>
<rect x="283.0" y="419.6" width="7" height="0.9" fill="#2a2c30"/>
<rect x="283.0" y="422.6" width="10" height="0.9" fill="#2a2c30"/>
<rect x="281.0" y="396.8" width="17.5" height="1.6" fill="#9c9a94"/>
<rect x="281.0" y="425.90000000000003" width="17.5" height="2" fill="#c4c3be"/>
<rect x="261.5" y="398.1" width="8.5" height="4" fill="#25282d"/>
<rect x="261.5" y="402.1" width="8.5" height="1.5" fill="#7c828c"/>
<rect x="261.5" y="422.1" width="8.5" height="3.5" fill="#25282d"/>
<rect x="261.5" y="425.6" width="8.5" height="1.5" fill="#6f757f"/>
<rect x="261.5" y="395.6" width="1" height="33" fill="#7a808a"/>
<text x="258.8" y="414.6" text-anchor="end" font-family="Liberation Sans" font-size="7" fill="#e6e9ee" textLength="8.5" lengthAdjust="spacingAndGlyphs">P12</text>
<rect x="260.0" y="288.0" width="49.5" height="144.5" rx="3.5" fill="none" stroke="#8e949e" stroke-width="1.2"/>
<rect x="261.0" y="289.0" width="47.5" height="142.5" rx="2.5" fill="none" stroke="#3d414a" stroke-width="0.8" opacity="0.7"/>
<rect x="318.0" y="288.0" width="49.5" height="144.5" rx="3.5" fill="#4e545e"/>
<rect x="319.0" y="289.5" width="34" height="33" fill="url(#rec)"/>
<rect x="351.5" y="299.0" width="5" height="14" fill="#2c3036"/>
<rect x="328.0" y="293.0" width="19.5" height="27" fill="#0b0c0e"/>
<rect x="331.0" y="296.0" width="7" height="0.9" fill="#2a2c30"/>
<rect x="331.0" y="299.0" width="10" height="0.9" fill="#2a2c30"/>
<rect x="331.0" y="302.0" width="7" height="0.9" fill="#2a2c30"/>
<rect x="331.0" y="305.0" width="10" height="0.9" fill="#2a2c30"/>
<rect x="331.0" y="308.0" width="7" height="0.9" fill="#2a2c30"/>
<rect x="331.0" y="311.0" width="10" height="0.9" fill="#2a2c30"/>
<rect x="331.0" y="314.0" width="7" height="0.9" fill="#2a2c30"/>
<rect x="331.0" y="317.0" width="10" height="0.9" fill="#2a2c30"/>
<rect x="329.0" y="291.2" width="17.5" height="1.6" fill="#9c9a94"/>
<rect x="329.0" y="320.3" width="17.5" height="2" fill="#c4c3be"/>
<rect x="357.0" y="292.5" width="8.5" height="4" fill="#25282d"/>
<rect x="357.0" y="296.5" width="8.5" height="1.5" fill="#7c828c"/>
<rect x="357.0" y="316.5" width="8.5" height="3.5" fill="#25282d"/>
<rect x="357.0" y="320.0" width="8.5" height="1.5" fill="#6f757f"/>
<rect x="364.5" y="290.0" width="1" height="33" fill="#7a808a"/>
<rect x="319.0" y="323.2" width="47" height="1.6" fill="#8a909b"/>
<text x="369" y="309.0" font-family="Liberation Sans" font-size="7" fill="#e6e9ee" textLength="8.5" lengthAdjust="spacingAndGlyphs">P17</text>
<rect x="319.0" y="324.7" width="34" height="33" fill="url(#rec)"/>
<rect x="351.5" y="334.2" width="5" height="14" fill="#2c3036"/>
<rect x="328.0" y="328.2" width="19.5" height="27" fill="#0b0c0e"/>
<rect x="331.0" y="331.2" width="7" height="0.9" fill="#2a2c30"/>
<rect x="331.0" y="334.2" width="10" height="0.9" fill="#2a2c30"/>
<rect x="331.0" y="337.2" width="7" height="0.9" fill="#2a2c30"/>
<rect x="331.0" y="340.2" width="10" height="0.9" fill="#2a2c30"/>
<rect x="331.0" y="343.2" width="7" height="0.9" fill="#2a2c30"/>
<rect x="331.0" y="346.2" width="10" height="0.9" fill="#2a2c30"/>
<rect x="331.0" y="349.2" width="7" height="0.9" fill="#2a2c30"/>
<rect x="331.0" y="352.2" width="10" height="0.9" fill="#2a2c30"/>
<rect x="329.0" y="326.4" width="17.5" height="1.6" fill="#9c9a94"/>
<rect x="329.0" y="355.5" width="17.5" height="2" fill="#c4c3be"/>
<rect x="357.0" y="327.7" width="8.5" height="4" fill="#25282d"/>
<rect x="357.0" y="331.7" width="8.5" height="1.5" fill="#7c828c"/>
<rect x="357.0" y="351.7" width="8.5" height="3.5" fill="#25282d"/>
<rect x="357.0" y="355.2" width="8.5" height="1.5" fill="#6f757f"/>
<rect x="364.5" y="325.2" width="1" height="33" fill="#7a808a"/>
<rect x="319.0" y="358.4" width="47" height="1.6" fill="#8a909b"/>
<text x="369" y="344.2" font-family="Liberation Sans" font-size="7" fill="#e6e9ee" textLength="8.5" lengthAdjust="spacingAndGlyphs">P18</text>
<rect x="319.0" y="359.9" width="34" height="33" fill="url(#rec)"/>
<rect x="351.5" y="369.4" width="5" height="14" fill="#2c3036"/>
<rect x="328.0" y="363.4" width="19.5" height="27" fill="#0b0c0e"/>
<rect x="331.0" y="366.4" width="7" height="0.9" fill="#2a2c30"/>
<rect x="331.0" y="369.4" width="10" height="0.9" fill="#2a2c30"/>
<rect x="331.0" y="372.4" width="7" height="0.9" fill="#2a2c30"/>
<rect x="331.0" y="375.4" width="10" height="0.9" fill="#2a2c30"/>
<rect x="331.0" y="378.4" width="7" height="0.9" fill="#2a2c30"/>
<rect x="331.0" y="381.4" width="10" height="0.9" fill="#2a2c30"/>
<rect x="331.0" y="384.4" width="7" height="0.9" fill="#2a2c30"/>
<rect x="331.0" y="387.4" width="10" height="0.9" fill="#2a2c30"/>
<rect x="329.0" y="361.59999999999997" width="17.5" height="1.6" fill="#9c9a94"/>
<rect x="329.0" y="390.7" width="17.5" height="2" fill="#c4c3be"/>
<rect x="357.0" y="362.9" width="8.5" height="4" fill="#25282d"/>
<rect x="357.0" y="366.9" width="8.5" height="1.5" fill="#7c828c"/>
<rect x="357.0" y="386.9" width="8.5" height="3.5" fill="#25282d"/>
<rect x="357.0" y="390.4" width="8.5" height="1.5" fill="#6f757f"/>
<rect x="364.5" y="360.4" width="1" height="33" fill="#7a808a"/>
<rect x="319.0" y="393.59999999999997" width="47" height="1.6" fill="#8a909b"/>
<text x="369" y="379.4" font-family="Liberation Sans" font-size="7" fill="#e6e9ee" textLength="8.5" lengthAdjust="spacingAndGlyphs">P19</text>
<rect x="319.0" y="395.1" width="34" height="33" fill="url(#rec)"/>
<rect x="351.5" y="404.6" width="5" height="14" fill="#2c3036"/>
<rect x="328.0" y="398.6" width="19.5" height="27" fill="#0b0c0e"/>
<rect x="331.0" y="401.6" width="7" height="0.9" fill="#2a2c30"/>
<rect x="331.0" y="404.6" width="10" height="0.9" fill="#2a2c30"/>
<rect x="331.0" y="407.6" width="7" height="0.9" fill="#2a2c30"/>
<rect x="331.0" y="410.6" width="10" height="0.9" fill="#2a2c30"/>
<rect x="331.0" y="413.6" width="7" height="0.9" fill="#2a2c30"/>
<rect x="331.0" y="416.6" width="10" height="0.9" fill="#2a2c30"/>
<rect x="331.0" y="419.6" width="7" height="0.9" fill="#2a2c30"/>
<rect x="331.0" y="422.6" width="10" height="0.9" fill="#2a2c30"/>
<rect x="329.0" y="396.8" width="17.5" height="1.6" fill="#9c9a94"/>
<rect x="329.0" y="425.90000000000003" width="17.5" height="2" fill="#c4c3be"/>
<rect x="357.0" y="398.1" width="8.5" height="4" fill="#25282d"/>
<rect x="357.0" y="402.1" width="8.5" height="1.5" fill="#7c828c"/>
<rect x="357.0" y="422.1" width="8.5" height="3.5" fill="#25282d"/>
<rect x="357.0" y="425.6" width="8.5" height="1.5" fill="#6f757f"/>
<rect x="364.5" y="395.6" width="1" height="33" fill="#7a808a"/>
<text x="369" y="414.6" font-family="Liberation Sans" font-size="7" fill="#e6e9ee" textLength="8.5" lengthAdjust="spacingAndGlyphs">P20</text>
<rect x="318.0" y="288.0" width="49.5" height="144.5" rx="3.5" fill="none" stroke="#8e949e" stroke-width="1.2"/>
<rect x="319.0" y="289.0" width="47.5" height="142.5" rx="2.5" fill="none" stroke="#3d414a" stroke-width="0.8" opacity="0.7"/>
<rect x="188.0" y="438.0" width="49.5" height="144.5" rx="3.5" fill="#4e545e"/>
<rect x="189.0" y="439.5" width="34" height="33" fill="url(#rec)"/>
<rect x="221.5" y="449.0" width="5" height="14" fill="#2c3036"/>
<rect x="198.0" y="443.0" width="19.5" height="27" fill="#0b0c0e"/>
<rect x="201.0" y="446.0" width="7" height="0.9" fill="#2a2c30"/>
<rect x="201.0" y="449.0" width="10" height="0.9" fill="#2a2c30"/>
<rect x="201.0" y="452.0" width="7" height="0.9" fill="#2a2c30"/>
<rect x="201.0" y="455.0" width="10" height="0.9" fill="#2a2c30"/>
<rect x="201.0" y="458.0" width="7" height="0.9" fill="#2a2c30"/>
<rect x="201.0" y="461.0" width="10" height="0.9" fill="#2a2c30"/>
<rect x="201.0" y="464.0" width="7" height="0.9" fill="#2a2c30"/>
<rect x="201.0" y="467.0" width="10" height="0.9" fill="#2a2c30"/>
<rect x="199.0" y="441.2" width="17.5" height="1.6" fill="#9c9a94"/>
<rect x="199.0" y="470.3" width="17.5" height="2" fill="#c4c3be"/>
<rect x="227.0" y="442.5" width="8.5" height="4" fill="#25282d"/>
<rect x="227.0" y="446.5" width="8.5" height="1.5" fill="#7c828c"/>
<rect x="227.0" y="466.5" width="8.5" height="3.5" fill="#25282d"/>
<rect x="227.0" y="470.0" width="8.5" height="1.5" fill="#6f757f"/>
<rect x="234.5" y="440.0" width="1" height="33" fill="#7a808a"/>
<rect x="189.0" y="473.2" width="47" height="1.6" fill="#8a909b"/>
<text x="238" y="459.0" font-family="Liberation Sans" font-size="7" fill="#e6e9ee" textLength="6.2" lengthAdjust="spacingAndGlyphs">P5</text>
<rect x="189.0" y="474.7" width="34" height="33" fill="url(#rec)"/>
<rect x="221.5" y="484.2" width="5" height="14" fill="#2c3036"/>
<rect x="198.0" y="478.2" width="19.5" height="27" fill="#0b0c0e"/>
<rect x="201.0" y="481.2" width="7" height="0.9" fill="#2a2c30"/>
<rect x="201.0" y="484.2" width="10" height="0.9" fill="#2a2c30"/>
<rect x="201.0" y="487.2" width="7" height="0.9" fill="#2a2c30"/>
<rect x="201.0" y="490.2" width="10" height="0.9" fill="#2a2c30"/>
<rect x="201.0" y="493.2" width="7" height="0.9" fill="#2a2c30"/>
<rect x="201.0" y="496.2" width="10" height="0.9" fill="#2a2c30"/>
<rect x="201.0" y="499.2" width="7" height="0.9" fill="#2a2c30"/>
<rect x="201.0" y="502.2" width="10" height="0.9" fill="#2a2c30"/>
<rect x="199.0" y="476.4" width="17.5" height="1.6" fill="#9c9a94"/>
<rect x="199.0" y="505.5" width="17.5" height="2" fill="#c4c3be"/>
<rect x="227.0" y="477.7" width="8.5" height="4" fill="#25282d"/>
<rect x="227.0" y="481.7" width="8.5" height="1.5" fill="#7c828c"/>
<rect x="227.0" y="501.7" width="8.5" height="3.5" fill="#25282d"/>
<rect x="227.0" y="505.2" width="8.5" height="1.5" fill="#6f757f"/>
<rect x="234.5" y="475.2" width="1" height="33" fill="#7a808a"/>
<rect x="189.0" y="508.4" width="47" height="1.6" fill="#8a909b"/>
<text x="238" y="494.2" font-family="Liberation Sans" font-size="7" fill="#e6e9ee" textLength="6.2" lengthAdjust="spacingAndGlyphs">P6</text>
<rect x="189.0" y="509.9" width="34" height="33" fill="url(#rec)"/>
<rect x="221.5" y="519.4" width="5" height="14" fill="#2c3036"/>
<rect x="198.0" y="513.4" width="19.5" height="27" fill="#0b0c0e"/>
<rect x="201.0" y="516.4" width="7" height="0.9" fill="#2a2c30"/>
<rect x="201.0" y="519.4" width="10" height="0.9" fill="#2a2c30"/>
<rect x="201.0" y="522.4" width="7" height="0.9" fill="#2a2c30"/>
<rect x="201.0" y="525.4" width="10" height="0.9" fill="#2a2c30"/>
<rect x="201.0" y="528.4" width="7" height="0.9" fill="#2a2c30"/>
<rect x="201.0" y="531.4" width="10" height="0.9" fill="#2a2c30"/>
<rect x="201.0" y="534.4" width="7" height="0.9" fill="#2a2c30"/>
<rect x="201.0" y="537.4" width="10" height="0.9" fill="#2a2c30"/>
<rect x="199.0" y="511.59999999999997" width="17.5" height="1.6" fill="#9c9a94"/>
<rect x="199.0" y="540.6999999999999" width="17.5" height="2" fill="#c4c3be"/>
<rect x="227.0" y="512.9" width="8.5" height="4" fill="#25282d"/>
<rect x="227.0" y="516.9" width="8.5" height="1.5" fill="#7c828c"/>
<rect x="227.0" y="536.9" width="8.5" height="3.5" fill="#25282d"/>
<rect x="227.0" y="540.4" width="8.5" height="1.5" fill="#6f757f"/>
<rect x="234.5" y="510.4" width="1" height="33" fill="#7a808a"/>
<rect x="189.0" y="543.6" width="47" height="1.6" fill="#8a909b"/>
<text x="238" y="529.4" font-family="Liberation Sans" font-size="7" fill="#e6e9ee" textLength="6.2" lengthAdjust="spacingAndGlyphs">P7</text>
<rect x="189.0" y="545.1" width="34" height="33" fill="url(#rec)"/>
<rect x="221.5" y="554.6" width="5" height="14" fill="#2c3036"/>
<rect x="198.0" y="548.6" width="19.5" height="27" fill="#0b0c0e"/>
<rect x="201.0" y="551.6" width="7" height="0.9" fill="#2a2c30"/>
<rect x="201.0" y="554.6" width="10" height="0.9" fill="#2a2c30"/>
<rect x="201.0" y="557.6" width="7" height="0.9" fill="#2a2c30"/>
<rect x="201.0" y="560.6" width="10" height="0.9" fill="#2a2c30"/>
<rect x="201.0" y="563.6" width="7" height="0.9" fill="#2a2c30"/>
<rect x="201.0" y="566.6" width="10" height="0.9" fill="#2a2c30"/>
<rect x="201.0" y="569.6" width="7" height="0.9" fill="#2a2c30"/>
<rect x="201.0" y="572.6" width="10" height="0.9" fill="#2a2c30"/>
<rect x="199.0" y="546.8000000000001" width="17.5" height="1.6" fill="#9c9a94"/>
<rect x="199.0" y="575.9" width="17.5" height="2" fill="#c4c3be"/>
<rect x="227.0" y="548.1" width="8.5" height="4" fill="#25282d"/>
<rect x="227.0" y="552.1" width="8.5" height="1.5" fill="#7c828c"/>
<rect x="227.0" y="572.1" width="8.5" height="3.5" fill="#25282d"/>
<rect x="227.0" y="575.6" width="8.5" height="1.5" fill="#6f757f"/>
<rect x="234.5" y="545.6" width="1" height="33" fill="#7a808a"/>
<text x="238" y="564.6" font-family="Liberation Sans" font-size="7" fill="#e6e9ee" textLength="6.2" lengthAdjust="spacingAndGlyphs">P8</text>
<rect x="188.0" y="438.0" width="49.5" height="144.5" rx="3.5" fill="none" stroke="#8e949e" stroke-width="1.2"/>
<rect x="189.0" y="439.0" width="47.5" height="142.5" rx="2.5" fill="none" stroke="#3d414a" stroke-width="0.8" opacity="0.7"/>
<rect x="260.0" y="438.0" width="49.5" height="144.5" rx="3.5" fill="#4e545e"/>
<rect x="273.0" y="439.5" width="35" height="33" fill="url(#recm)"/>
<rect x="272.5" y="449.0" width="5" height="14" fill="#25282d"/>
<rect x="280.0" y="443.0" width="19.5" height="27" fill="#0b0c0e"/>
<rect x="283.0" y="446.0" width="7" height="0.9" fill="#2a2c30"/>
<rect x="283.0" y="449.0" width="10" height="0.9" fill="#2a2c30"/>
<rect x="283.0" y="452.0" width="7" height="0.9" fill="#2a2c30"/>
<rect x="283.0" y="455.0" width="10" height="0.9" fill="#2a2c30"/>
<rect x="283.0" y="458.0" width="7" height="0.9" fill="#2a2c30"/>
<rect x="283.0" y="461.0" width="10" height="0.9" fill="#2a2c30"/>
<rect x="283.0" y="464.0" width="7" height="0.9" fill="#2a2c30"/>
<rect x="283.0" y="467.0" width="10" height="0.9" fill="#2a2c30"/>
<rect x="281.0" y="441.2" width="17.5" height="1.6" fill="#9c9a94"/>
<rect x="281.0" y="470.3" width="17.5" height="2" fill="#c4c3be"/>
<rect x="261.5" y="442.5" width="8.5" height="4" fill="#25282d"/>
<rect x="261.5" y="446.5" width="8.5" height="1.5" fill="#7c828c"/>
<rect x="261.5" y="466.5" width="8.5" height="3.5" fill="#25282d"/>
<rect x="261.5" y="470.0" width="8.5" height="1.5" fill="#6f757f"/>
<rect x="261.5" y="440.0" width="1" height="33" fill="#7a808a"/>
<rect x="261.0" y="473.2" width="47" height="1.6" fill="#8a909b"/>
<text x="258.8" y="459.0" text-anchor="end" font-family="Liberation Sans" font-size="7" fill="#e6e9ee" textLength="8.5" lengthAdjust="spacingAndGlyphs">P13</text>
<rect x="273.0" y="474.7" width="35" height="33" fill="url(#recm)"/>
<rect x="272.5" y="484.2" width="5" height="14" fill="#25282d"/>
<rect x="280.0" y="478.2" width="19.5" height="27" fill="#0b0c0e"/>
<rect x="283.0" y="481.2" width="7" height="0.9" fill="#2a2c30"/>
<rect x="283.0" y="484.2" width="10" height="0.9" fill="#2a2c30"/>
<rect x="283.0" y="487.2" width="7" height="0.9" fill="#2a2c30"/>
<rect x="283.0" y="490.2" width="10" height="0.9" fill="#2a2c30"/>
<rect x="283.0" y="493.2" width="7" height="0.9" fill="#2a2c30"/>
<rect x="283.0" y="496.2" width="10" height="0.9" fill="#2a2c30"/>
<rect x="283.0" y="499.2" width="7" height="0.9" fill="#2a2c30"/>
<rect x="283.0" y="502.2" width="10" height="0.9" fill="#2a2c30"/>
<rect x="281.0" y="476.4" width="17.5" height="1.6" fill="#9c9a94"/>
<rect x="281.0" y="505.5" width="17.5" height="2" fill="#c4c3be"/>
<rect x="261.5" y="477.7" width="8.5" height="4" fill="#25282d"/>
<rect x="261.5" y="481.7" width="8.5" height="1.5" fill="#7c828c"/>
<rect x="261.5" y="501.7" width="8.5" height="3.5" fill="#25282d"/>
<rect x="261.5" y="505.2" width="8.5" height="1.5" fill="#6f757f"/>
<rect x="261.5" y="475.2" width="1" height="33" fill="#7a808a"/>
<rect x="261.0" y="508.4" width="47" height="1.6" fill="#8a909b"/>
<text x="258.8" y="494.2" text-anchor="end" font-family="Liberation Sans" font-size="7" fill="#e6e9ee" textLength="8.5" lengthAdjust="spacingAndGlyphs">P14</text>
<rect x="273.0" y="509.9" width="35" height="33" fill="url(#recm)"/>
<rect x="272.5" y="519.4" width="5" height="14" fill="#25282d"/>
<rect x="280.0" y="513.4" width="19.5" height="27" fill="#0b0c0e"/>
<rect x="283.0" y="516.4" width="7" height="0.9" fill="#2a2c30"/>
<rect x="283.0" y="519.4" width="10" height="0.9" fill="#2a2c30"/>
<rect x="283.0" y="522.4" width="7" height="0.9" fill="#2a2c30"/>
<rect x="283.0" y="525.4" width="10" height="0.9" fill="#2a2c30"/>
<rect x="283.0" y="528.4" width="7" height="0.9" fill="#2a2c30"/>
<rect x="283.0" y="531.4" width="10" height="0.9" fill="#2a2c30"/>
<rect x="283.0" y="534.4" width="7" height="0.9" fill="#2a2c30"/>
<rect x="283.0" y="537.4" width="10" height="0.9" fill="#2a2c30"/>
<rect x="281.0" y="511.59999999999997" width="17.5" height="1.6" fill="#9c9a94"/>
<rect x="281.0" y="540.6999999999999" width="17.5" height="2" fill="#c4c3be"/>
<rect x="261.5" y="512.9" width="8.5" height="4" fill="#25282d"/>
<rect x="261.5" y="516.9" width="8.5" height="1.5" fill="#7c828c"/>
<rect x="261.5" y="536.9" width="8.5" height="3.5" fill="#25282d"/>
<rect x="261.5" y="540.4" width="8.5" height="1.5" fill="#6f757f"/>
<rect x="261.5" y="510.4" width="1" height="33" fill="#7a808a"/>
<rect x="261.0" y="543.6" width="47" height="1.6" fill="#8a909b"/>
<text x="258.8" y="529.4" text-anchor="end" font-family="Liberation Sans" font-size="7" fill="#e6e9ee" textLength="8.5" lengthAdjust="spacingAndGlyphs">P15</text>
<rect x="273.0" y="545.1" width="35" height="33" fill="url(#recm)"/>
<rect x="272.5" y="554.6" width="5" height="14" fill="#25282d"/>
<rect x="280.0" y="548.6" width="19.5" height="27" fill="#0b0c0e"/>
<rect x="283.0" y="551.6" width="7" height="0.9" fill="#2a2c30"/>
<rect x="283.0" y="554.6" width="10" height="0.9" fill="#2a2c30"/>
<rect x="283.0" y="557.6" width="7" height="0.9" fill="#2a2c30"/>
<rect x="283.0" y="560.6" width="10" height="0.9" fill="#2a2c30"/>
<rect x="283.0" y="563.6" width="7" height="0.9" fill="#2a2c30"/>
<rect x="283.0" y="566.6" width="10" height="0.9" fill="#2a2c30"/>
<rect x="283.0" y="569.6" width="7" height="0.9" fill="#2a2c30"/>
<rect x="283.0" y="572.6" width="10" height="0.9" fill="#2a2c30"/>
<rect x="281.0" y="546.8000000000001" width="17.5" height="1.6" fill="#9c9a94"/>
<rect x="281.0" y="575.9" width="17.5" height="2" fill="#c4c3be"/>
<rect x="261.5" y="548.1" width="8.5" height="4" fill="#25282d"/>
<rect x="261.5" y="552.1" width="8.5" height="1.5" fill="#7c828c"/>
<rect x="261.5" y="572.1" width="8.5" height="3.5" fill="#25282d"/>
<rect x="261.5" y="575.6" width="8.5" height="1.5" fill="#6f757f"/>
<rect x="261.5" y="545.6" width="1" height="33" fill="#7a808a"/>
<text x="258.8" y="564.6" text-anchor="end" font-family="Liberation Sans" font-size="7" fill="#e6e9ee" textLength="8.5" lengthAdjust="spacingAndGlyphs">P16</text>
<rect x="260.0" y="438.0" width="49.5" height="144.5" rx="3.5" fill="none" stroke="#8e949e" stroke-width="1.2"/>
<rect x="261.0" y="439.0" width="47.5" height="142.5" rx="2.5" fill="none" stroke="#3d414a" stroke-width="0.8" opacity="0.7"/>
<rect x="318.0" y="438.0" width="49.5" height="144.5" rx="3.5" fill="#4e545e"/>
<rect x="319.0" y="439.5" width="34" height="33" fill="url(#rec)"/>
<rect x="351.5" y="449.0" width="5" height="14" fill="#2c3036"/>
<rect x="328.0" y="443.0" width="19.5" height="27" fill="#0b0c0e"/>
<rect x="331.0" y="446.0" width="7" height="0.9" fill="#2a2c30"/>
<rect x="331.0" y="449.0" width="10" height="0.9" fill="#2a2c30"/>
<rect x="331.0" y="452.0" width="7" height="0.9" fill="#2a2c30"/>
<rect x="331.0" y="455.0" width="10" height="0.9" fill="#2a2c30"/>
<rect x="331.0" y="458.0" width="7" height="0.9" fill="#2a2c30"/>
<rect x="331.0" y="461.0" width="10" height="0.9" fill="#2a2c30"/>
<rect x="331.0" y="464.0" width="7" height="0.9" fill="#2a2c30"/>
<rect x="331.0" y="467.0" width="10" height="0.9" fill="#2a2c30"/>
<rect x="329.0" y="441.2" width="17.5" height="1.6" fill="#9c9a94"/>
<rect x="329.0" y="470.3" width="17.5" height="2" fill="#c4c3be"/>
<rect x="357.0" y="442.5" width="8.5" height="4" fill="#25282d"/>
<rect x="357.0" y="446.5" width="8.5" height="1.5" fill="#7c828c"/>
<rect x="357.0" y="466.5" width="8.5" height="3.5" fill="#25282d"/>
<rect x="357.0" y="470.0" width="8.5" height="1.5" fill="#6f757f"/>
<rect x="364.5" y="440.0" width="1" height="33" fill="#7a808a"/>
<rect x="319.0" y="473.2" width="47" height="1.6" fill="#8a909b"/>
<text x="369" y="459.0" font-family="Liberation Sans" font-size="7" fill="#e6e9ee" textLength="8.5" lengthAdjust="spacingAndGlyphs">P21</text>
<rect x="319.0" y="474.7" width="34" height="33" fill="url(#rec)"/>
<rect x="351.5" y="484.2" width="5" height="14" fill="#2c3036"/>
<rect x="328.0" y="478.2" width="19.5" height="27" fill="#0b0c0e"/>
<rect x="331.0" y="481.2" width="7" height="0.9" fill="#2a2c30"/>
<rect x="331.0" y="484.2" width="10" height="0.9" fill="#2a2c30"/>
<rect x="331.0" y="487.2" width="7" height="0.9" fill="#2a2c30"/>
<rect x="331.0" y="490.2" width="10" height="0.9" fill="#2a2c30"/>
<rect x="331.0" y="493.2" width="7" height="0.9" fill="#2a2c30"/>
<rect x="331.0" y="496.2" width="10" height="0.9" fill="#2a2c30"/>
<rect x="331.0" y="499.2" width="7" height="0.9" fill="#2a2c30"/>
<rect x="331.0" y="502.2" width="10" height="0.9" fill="#2a2c30"/>
<rect x="329.0" y="476.4" width="17.5" height="1.6" fill="#9c9a94"/>
<rect x="329.0" y="505.5" width="17.5" height="2" fill="#c4c3be"/>
<rect x="357.0" y="477.7" width="8.5" height="4" fill="#25282d"/>
<rect x="357.0" y="481.7" width="8.5" height="1.5" fill="#7c828c"/>
<rect x="357.0" y="501.7" width="8.5" height="3.5" fill="#25282d"/>
<rect x="357.0" y="505.2" width="8.5" height="1.5" fill="#6f757f"/>
<rect x="364.5" y="475.2" width="1" height="33" fill="#7a808a"/>
<rect x="319.0" y="508.4" width="47" height="1.6" fill="#8a909b"/>
<text x="369" y="494.2" font-family="Liberation Sans" font-size="7" fill="#e6e9ee" textLength="8.5" lengthAdjust="spacingAndGlyphs">P22</text>
<rect x="319.0" y="509.9" width="34" height="33" fill="url(#rec)"/>
<rect x="351.5" y="519.4" width="5" height="14" fill="#2c3036"/>
<rect x="328.0" y="513.4" width="19.5" height="27" fill="#0b0c0e"/>
<rect x="331.0" y="516.4" width="7" height="0.9" fill="#2a2c30"/>
<rect x="331.0" y="519.4" width="10" height="0.9" fill="#2a2c30"/>
<rect x="331.0" y="522.4" width="7" height="0.9" fill="#2a2c30"/>
<rect x="331.0" y="525.4" width="10" height="0.9" fill="#2a2c30"/>
<rect x="331.0" y="528.4" width="7" height="0.9" fill="#2a2c30"/>
<rect x="331.0" y="531.4" width="10" height="0.9" fill="#2a2c30"/>
<rect x="331.0" y="534.4" width="7" height="0.9" fill="#2a2c30"/>
<rect x="331.0" y="537.4" width="10" height="0.9" fill="#2a2c30"/>
<rect x="329.0" y="511.59999999999997" width="17.5" height="1.6" fill="#9c9a94"/>
<rect x="329.0" y="540.6999999999999" width="17.5" height="2" fill="#c4c3be"/>
<rect x="357.0" y="512.9" width="8.5" height="4" fill="#25282d"/>
<rect x="357.0" y="516.9" width="8.5" height="1.5" fill="#7c828c"/>
<rect x="357.0" y="536.9" width="8.5" height="3.5" fill="#25282d"/>
<rect x="357.0" y="540.4" width="8.5" height="1.5" fill="#6f757f"/>
<rect x="364.5" y="510.4" width="1" height="33" fill="#7a808a"/>
<rect x="319.0" y="543.6" width="47" height="1.6" fill="#8a909b"/>
<text x="369" y="529.4" font-family="Liberation Sans" font-size="7" fill="#e6e9ee" textLength="8.5" lengthAdjust="spacingAndGlyphs">P23</text>
<rect x="319.0" y="545.1" width="34" height="33" fill="url(#rec)"/>
<rect x="351.5" y="554.6" width="5" height="14" fill="#2c3036"/>
<rect x="328.0" y="548.6" width="19.5" height="27" fill="#0b0c0e"/>
<rect x="331.0" y="551.6" width="7" height="0.9" fill="#2a2c30"/>
<rect x="331.0" y="554.6" width="10" height="0.9" fill="#2a2c30"/>
<rect x="331.0" y="557.6" width="7" height="0.9" fill="#2a2c30"/>
<rect x="331.0" y="560.6" width="10" height="0.9" fill="#2a2c30"/>
<rect x="331.0" y="563.6" width="7" height="0.9" fill="#2a2c30"/>
<rect x="331.0" y="566.6" width="10" height="0.9" fill="#2a2c30"/>
<rect x="331.0" y="569.6" width="7" height="0.9" fill="#2a2c30"/>
<rect x="331.0" y="572.6" width="10" height="0.9" fill="#2a2c30"/>
<rect x="329.0" y="546.8000000000001" width="17.5" height="1.6" fill="#9c9a94"/>
<rect x="329.0" y="575.9" width="17.5" height="2" fill="#c4c3be"/>
<rect x="357.0" y="548.1" width="8.5" height="4" fill="#25282d"/>
<rect x="357.0" y="552.1" width="8.5" height="1.5" fill="#7c828c"/>
<rect x="357.0" y="572.1" width="8.5" height="3.5" fill="#25282d"/>
<rect x="357.0" y="575.6" width="8.5" height="1.5" fill="#6f757f"/>
<rect x="364.5" y="545.6" width="1" height="33" fill="#7a808a"/>
<text x="369" y="564.6" font-family="Liberation Sans" font-size="7" fill="#e6e9ee" textLength="8.5" lengthAdjust="spacingAndGlyphs">P24</text>
<rect x="318.0" y="438.0" width="49.5" height="144.5" rx="3.5" fill="none" stroke="#8e949e" stroke-width="1.2"/>
<rect x="319.0" y="439.0" width="47.5" height="142.5" rx="2.5" fill="none" stroke="#3d414a" stroke-width="0.8" opacity="0.7"/>
<text x="339" y="276.5" font-family="Liberation Sans" font-size="6" fill="#c4c8d0" textLength="46" lengthAdjust="spacingAndGlyphs">SCALANCE XC224</text>
<circle cx="154.7" cy="445" r="5" fill="#2b2e33" stroke="#0c0d0f" stroke-width="1"/>
<text x="133" y="444" font-family="Liberation Sans" font-size="4.5" fill="#d0d2d4" textLength="16" lengthAdjust="spacingAndGlyphs">SELECT/</text>
<text x="133" y="450" font-family="Liberation Sans" font-size="4.5" fill="#d0d2d4">SET</text>
<rect x="149" y="453" width="27" height="32" fill="#3a3d42" stroke="#1e2024" stroke-width="1"/>
<rect x="151" y="458" width="21" height="22" fill="#15171a"/>
<rect x="151" y="458" width="6" height="22" fill="#202226"/>
<rect x="165.5" y="463.5" width="6" height="0.9" fill="#8f9296"/>
<rect x="165.5" y="466.1" width="6" height="0.9" fill="#8f9296"/>
<rect x="165.5" y="468.7" width="6" height="0.9" fill="#8f9296"/>
<rect x="165.5" y="471.3" width="6" height="0.9" fill="#8f9296"/>
<circle cx="154.7" cy="493.8" r="6" fill="none" stroke="#d8dadc" stroke-width="1"/>
<line x1="150.5" y1="489.6" x2="158.9" y2="498" stroke="#d8dadc" stroke-width="1"/>
<text x="137" y="481" font-family="Liberation Sans" font-size="5" fill="#c8ccd4" transform="rotate(-90 137 481)" textLength="22" lengthAdjust="spacingAndGlyphs">CONSOLE</text>
<text x="137" y="528" font-family="Liberation Sans" font-size="5" fill="#c8ccd4" transform="rotate(-90 137 528)" textLength="12" lengthAdjust="spacingAndGlyphs">FAULT</text>
<rect x="148.5" y="513" width="34" height="23" fill="#2a2d32" stroke="#1a1c20" stroke-width="1"/>
<rect x="167" y="514" width="15" height="21" fill="#3a3d42"/>
<circle cx="155.9" cy="518.5" r="4" fill="#d9d9d9" stroke="#0d0e10" stroke-width="1.4"/>
<rect x="154.2" y="516.2" width="3.4" height="4.6" fill="#bdbdbd"/>
<rect x="162.5" y="514.5" width="2" height="8" fill="#4a4d52"/>
<circle cx="179" cy="518.5" r="3" fill="#0e0f11"/>
<circle cx="155.9" cy="529.6" r="4" fill="#d9d9d9" stroke="#0d0e10" stroke-width="1.4"/>
<rect x="154.2" y="527.3000000000001" width="3.4" height="4.6" fill="#bdbdbd"/>
<rect x="162.5" y="525.6" width="2" height="8" fill="#4a4d52"/>
<circle cx="179" cy="529.6" r="3" fill="#0e0f11"/>
<rect x="148.5" y="539" width="34" height="46.5" fill="#2a2d32" stroke="#1a1c20" stroke-width="1"/>
<rect x="167" y="540" width="15" height="44.5" fill="#3a3d42"/>
<circle cx="155.9" cy="544.4" r="4" fill="#d9d9d9" stroke="#0d0e10" stroke-width="1.4"/>
<rect x="154.2" y="542.1" width="3.4" height="4.6" fill="#bdbdbd"/>
<rect x="162.5" y="540.4" width="2" height="8" fill="#4a4d52"/>
<circle cx="179" cy="544.4" r="3" fill="#0e0f11"/>
<circle cx="155.9" cy="555.8" r="4" fill="#d9d9d9" stroke="#0d0e10" stroke-width="1.4"/>
<rect x="154.2" y="553.5" width="3.4" height="4.6" fill="#bdbdbd"/>
<rect x="162.5" y="551.8" width="2" height="8" fill="#4a4d52"/>
<circle cx="179" cy="555.8" r="3" fill="#0e0f11"/>
<circle cx="155.9" cy="567.5" r="4" fill="#d9d9d9" stroke="#0d0e10" stroke-width="1.4"/>
<rect x="154.2" y="565.2" width="3.4" height="4.6" fill="#bdbdbd"/>
<rect x="162.5" y="563.5" width="2" height="8" fill="#4a4d52"/>
<circle cx="179" cy="567.5" r="3" fill="#0e0f11"/>
<circle cx="155.9" cy="579.1" r="4" fill="#d9d9d9" stroke="#0d0e10" stroke-width="1.4"/>
<rect x="154.2" y="576.8000000000001" width="3.4" height="4.6" fill="#bdbdbd"/>
<rect x="162.5" y="575.1" width="2" height="8" fill="#4a4d52"/>
<circle cx="179" cy="579.1" r="3" fill="#0e0f11"/>
<text x="143.5" y="520" font-family="Liberation Sans" font-size="4.5" fill="#c8ccd4" transform="rotate(-90 143 518.5)">F</text>
<text x="143.5" y="531" font-family="Liberation Sans" font-size="4.5" fill="#c8ccd4" transform="rotate(-90 143 529.5)">M</text>
<text x="138.5" y="546" font-family="Liberation Sans" font-size="4.5" fill="#c8ccd4" transform="rotate(-90 143 544.5)">L1+</text>
<text x="141.0" y="558" font-family="Liberation Sans" font-size="4.5" fill="#c8ccd4" transform="rotate(-90 143 556.5)">M1</text>
<text x="141.0" y="569" font-family="Liberation Sans" font-size="4.5" fill="#c8ccd4" transform="rotate(-90 143 567.5)">M2</text>
<text x="138.5" y="581" font-family="Liberation Sans" font-size="4.5" fill="#c8ccd4" transform="rotate(-90 143 579.5)">L2+</text>
<rect x="218.5" y="599.5" width="69.5" height="3.5" fill="#404146"/>
<rect x="223" y="599.5" width="15.5" height="11" rx="1" fill="#1f2024"/>
<polygon points="257.5,599.5 274,599.5 270,607 261.5,607" fill="#3b3e45"/>
<rect x="351.5" y="599.5" width="19" height="3" rx="1" fill="#46494e"/>
<rect x="356" y="602" width="10" height="6" fill="url(#gnd)"/>
<rect x="352.5" y="606.5" width="17" height="7.5" rx="2" fill="url(#gnd)"/>
<rect x="352.5" y="609.5" width="17" height="1" fill="#5d6065"/>
<text x="368" y="590.5" text-anchor="end" font-family="Liberation Sans" font-size="4.5" fill="#d0d3d8" textLength="36" lengthAdjust="spacingAndGlyphs">6GK5 224-0BA00-2AC2</text>
<text x="368" y="595.5" text-anchor="end" font-family="Liberation Sans" font-size="4.5" fill="#d0d3d8" textLength="24" lengthAdjust="spacingAndGlyphs">X1 X2 X3 X4</text>
<path d="M377.5,580.5 v7 M373,587.5 h9 M374.5,589.5 h6 M376,591.5 h3" stroke="#d6d9de" stroke-width="0.9" fill="none"/>
</svg>
<!-- dots overlay -->
<div class="a dt" style="left:154px;top:43px;width:721px;height:33px;background-image:linear-gradient(90deg,rgba(0,0,230,.17) 2px,transparent 2px)"></div>
<div class="a dt" style="left:37px;top:91px;width:433px;height:558px;background-image:linear-gradient(90deg,rgba(0,0,230,.17) 2px,transparent 2px)"></div>
<div class="a dt" style="left:469px;top:91px;width:406px;height:558px;background-image:linear-gradient(90deg,rgba(0,0,230,.17) 1px,transparent 1px)"></div>
</body></html>
